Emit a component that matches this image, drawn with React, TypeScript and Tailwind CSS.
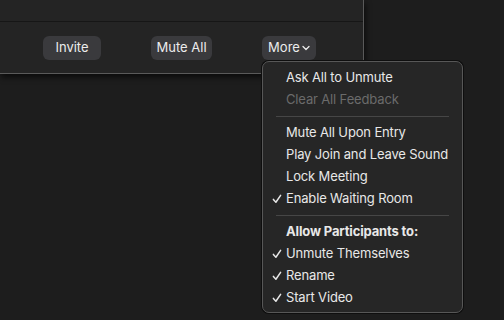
import React from "react";

const Check: React.FC = () => (
  <svg width="10" height="10" viewBox="0 0 10 10" className="absolute left-[9px] top-1/2 -translate-y-1/2">
    <path d="M1.4 5.4 L3.9 8.2 L8.6 1.4" fill="none" stroke="#e6e6e6" strokeWidth="1.5" strokeLinecap="round" strokeLinejoin="round" />
  </svg>
);

type Item = { label: string; checked?: boolean; disabled?: boolean; bold?: boolean };

const MenuRow: React.FC<{ item: Item }> = ({ item }) => (
  <div
    className={
      "relative h-[22px] flex items-center pl-[23px] text-[13px] tracking-[-0.15px] " +
      (item.disabled ? "text-[#6b6b6b]" : "text-[#e8e8e8]") +
      (item.bold ? " font-bold" : "")
    }
  >
    {item.checked && <Check />}
    {item.label}
  </div>
);

const Sep: React.FC = () => <div className="mx-[13px] mt-[5px] mb-[5px] h-px bg-[#464646]" />;

export default function App() {
  return (
    <div
      className="relative w-[504px] h-[320px] bg-[#1d1d1d] overflow-hidden"
      style={{ fontFamily: "Inter, 'Noto Sans', sans-serif" }}
    >
      <div className="w-[364px] h-[74px] bg-[#242424] border-r border-b border-[#5a5a5a] rounded-br-[6px] shadow-[1px_3px_6px_rgba(0,0,0,0.7)]">
        <div className="h-[22px] border-b border-[#161616]" />
        <div className="flex items-center gap-[50px] pl-[43px] pt-[14px]">
          <button className="w-[58px] h-[24px] rounded-[6px] bg-[#3a3a3d] text-[13px] text-[#ececec]">Invite</button>
          <button className="w-[61px] h-[24px] rounded-[6px] bg-[#3a3a3d] text-[13px] text-[#ececec]">Mute All</button>
          <button className="w-[54px] h-[24px] rounded-[6px] bg-[#3a3a3d] text-[13px] text-[#ececec] flex items-center justify-center gap-[2px]">
            More
            <svg width="8" height="6" viewBox="0 0 8 6">
              <path d="M1 1.5 L4 4.5 L7 1.5" fill="none" stroke="#ececec" strokeWidth="1.3" strokeLinecap="round" strokeLinejoin="round" />
            </svg>
          </button>
        </div>
      </div>

      <div className="absolute left-[262px] top-[61px] w-[201px] h-[252px] rounded-[7px] bg-[#262626] border border-[#575757] shadow-[0_0_0_1px_#0e0e0e] pt-[5px]">
        <MenuRow item={{ label: "Ask All to Unmute" }} />
        <MenuRow item={{ label: "Clear All Feedback", disabled: true }} />
        <Sep />
        <MenuRow item={{ label: "Mute All Upon Entry" }} />
        <MenuRow item={{ label: "Play Join and Leave Sound" }} />
        <MenuRow item={{ label: "Lock Meeting" }} />
        <MenuRow item={{ label: "Enable Waiting Room", checked: true }} />
        <Sep />
        <MenuRow item={{ label: "Allow Participants to:", bold: true }} />
        <MenuRow item={{ label: "Unmute Themselves", checked: true }} />
        <MenuRow item={{ label: "Rename", checked: true }} />
        <MenuRow item={{ label: "Start Video", checked: true }} />
      </div>
    </div>
  );
}
